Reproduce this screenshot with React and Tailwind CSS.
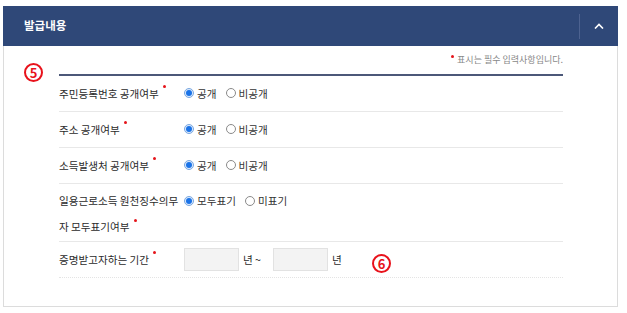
const rows = [
  { label: "주민등록번호 공개여부", options: ["공개", "비공개"] },
  { label: "주소 공개여부", options: ["공개", "비공개"] },
  { label: "소득발생처 공개여부", options: ["공개", "비공개"] },
];

const Dot = () => (
  <span className="inline-block w-[3px] h-[3px] rounded-full bg-[#e5141a] ml-[4px] relative -top-[8px] align-middle" />
);

const Radio = ({ checked, label }) => (
  <label className="flex items-center gap-[2px] mr-[9px]">
    {checked ? (
      <span className="w-[10px] h-[10px] rounded-full border border-[#7aa7e0] bg-[#dbe9fb] flex items-center justify-center">
        <span className="w-[6px] h-[6px] rounded-full bg-[#1a73e8]" />
      </span>
    ) : (
      <span className="w-[10px] h-[10px] rounded-full border border-[#8a8a8a] bg-white" />
    )}
    <span className="text-[#333] ml-[1px]">{label}</span>
  </label>
);

const Marker = ({ n, className }) => (
  <span
    className={`absolute w-[19px] h-[19px] rounded-full border-2 border-[#e8121b] text-[#e8121b] font-bold text-[13px] leading-none flex items-center justify-center ${className}`}
  >
    {n}
  </span>
);

export default function App() {
  return (
    <div
      className="relative w-[627px] h-[313px] bg-white text-[10.6px] text-[#2b2b2b]"
      style={{ fontFamily: '"Noto Sans CJK KR", "Noto Sans", sans-serif' }}
    >
      <div className="pt-[6px] pl-[3px] w-[618px]">
        {/* header */}
        <div className="h-[40px] bg-[#2f4878] flex items-center">
          <h2 className="flex-1 pl-[21px] text-white font-bold text-[11.5px]">발급내용</h2>
          <div className="h-[25px] border-l border-[#4d6290]" />
          <div className="w-[38px] flex items-center justify-center">
            <svg width="10" height="6" viewBox="0 0 10 6">
              <polyline points="1,5.5 5,1.5 9,5.5" fill="none" stroke="#fff" strokeWidth="1.6" />
            </svg>
          </div>
        </div>

        {/* body */}
        <div className="h-[261px] border border-t-0 border-[#dcdcdc] pl-[55px] pt-[6px]">
          <div className="w-[504px]">
            <p className="h-[16px] flex items-center justify-end text-[9px] text-[#888]">
              <span className="inline-block w-[3px] h-[3px] rounded-full bg-[#e5141a] mr-[3px] relative -top-[4px]" />
              표시는 필수 입력사항입니다.
            </p>
            <div className="mt-[6px] h-[2px] bg-[#4c5879]" />

            {rows.map((r) => (
              <div key={r.label} className="h-[36px] flex items-center border-b border-[#e8e8e8]">
                <div className="w-[125px]">
                  {r.label}
                  <Dot />
                </div>
                <Radio checked label={r.options[0]} />
                <Radio label={r.options[1]} />
              </div>
            ))}

            <div className="h-[58px] flex items-start pt-[4px] border-b border-[#e8e8e8]">
              <div className="w-[125px] leading-[26px]">
                일용근로소득 원천징수의무
                <br />자 모두표기여부
                <Dot />
              </div>
              <div className="h-[26px] flex items-center">
                <Radio checked label="모두표기" />
                <Radio label="미표기" />
              </div>
            </div>

            <div className="h-[36px] flex items-center border-b border-dotted border-[#e4e4e4]">
              <div className="w-[125px]">
                증명받고자하는 기간
                <Dot />
              </div>
              <input className="w-[55px] h-[23px] bg-[#f3f3f3] border border-[#e2e2e2] outline-none" />
              <span className="ml-[4px]">년 ~</span>
              <input className="ml-[12px] w-[55px] h-[23px] bg-[#f3f3f3] border border-[#e2e2e2] outline-none" />
              <span className="ml-[4px]">년</span>
            </div>
          </div>
        </div>
      </div>

      <Marker n="5" className="left-[24px] top-[63px]" />
      <Marker n="6" className="left-[372px] top-[254px]" />
    </div>
  );
}
